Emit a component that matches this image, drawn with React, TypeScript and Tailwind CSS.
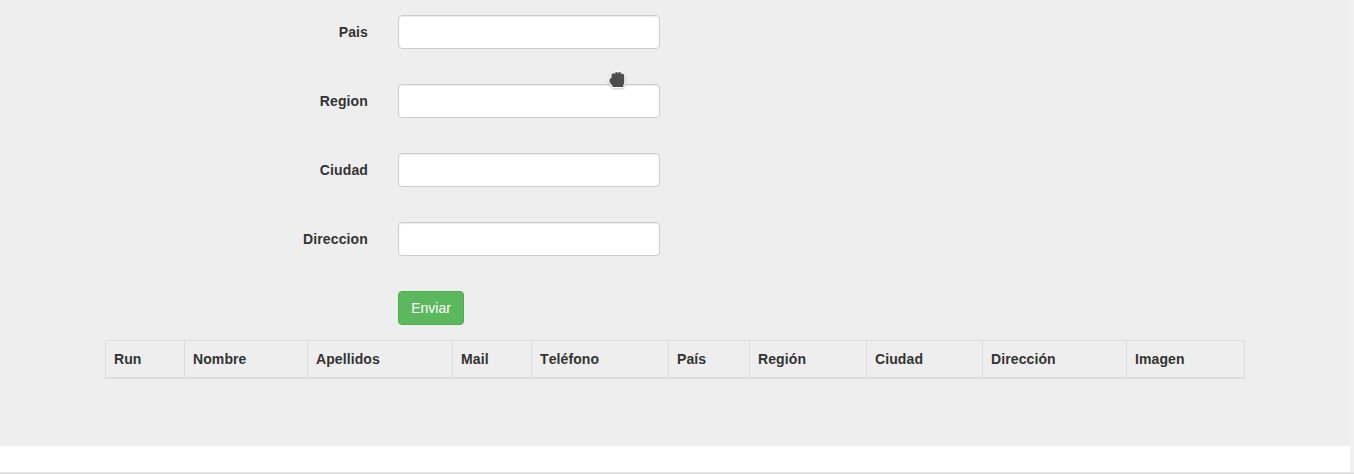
const fields = ["Pais", "Region", "Ciudad", "Direccion"];

const columns = [
  { title: "Run", width: "w-[79px]" },
  { title: "Nombre", width: "w-[123px]" },
  { title: "Apellidos", width: "w-[145px]" },
  { title: "Mail", width: "w-[79px]" },
  { title: "Teléfono", width: "w-[137px]" },
  { title: "País", width: "w-[81px]" },
  { title: "Región", width: "w-[117px]" },
  { title: "Ciudad", width: "w-[116px]" },
  { title: "Dirección", width: "w-[144px]" },
  { title: "Imagen", width: "w-[118px]" },
];

function GrabCursor() {
  return (
    <svg
      className="pointer-events-none absolute left-[607px] top-[69px] h-[22px] w-5 drop-shadow-[0_1px_1px_rgba(0,0,0,0.2)]"
      viewBox="0 0 20 22"
    >
      <path
        d="M5.6 18 V17 L2.8 13.4 Q1.6 11 3.2 9.3 L4.5 9.3 V6 Q4.6 4.3 6 4.3 L7.6 4.6 Q8.2 3 9.4 3 L10.8 3.6 Q12 2.7 13.4 3.2 L14.3 4.5 Q16.8 4.2 17.2 6 V14 L16.3 16.2 V18 Z"
        fill="#4d4d4d"
        stroke="#fff"
        strokeWidth="2"
        strokeLinejoin="round"
        paintOrder="stroke"
      />
      <path d="M7.8 3.2 V5.2 M11 2.8 V4.8 M14.2 3.2 V5.2" stroke="#c4c4c4" strokeWidth="0.8" />
    </svg>
  );
}

export default function App() {
  return (
    <div className="relative flex h-[474px] w-[1354px] overflow-hidden bg-[#f0f0f0] font-['Liberation_Sans',Arial,sans-serif] text-sm leading-5 text-[#333] [font-kerning:none]">
      <div className="flex w-[1350px] flex-col bg-white">
        <main className="h-[446px] bg-[#eee] pl-[105px] pt-[15px]">
          <form className="flex flex-col" onSubmit={(e) => e.preventDefault()}>
            {fields.map((name) => (
              <div key={name} className="mb-[35px] flex h-[34px] items-center">
                <label htmlFor={name} className="w-[263px] text-right font-bold tracking-[0.13px]">
                  {name}
                </label>
                <input
                  id={name}
                  type="text"
                  className="ml-[30px] h-[34px] w-[262px] rounded border border-[#ccc] bg-white px-3 shadow-[inset_0_1px_1px_rgba(0,0,0,0.075)] outline-none"
                />
              </div>
            ))}
            <button
              type="submit"
              className="ml-[293px] h-[34px] w-[66px] rounded border border-[#4cae4c] bg-[#5cb85c] text-white"
            >
              Enviar
            </button>
          </form>
          <table className="mt-[15px] w-[1140px] table-fixed border-separate border-spacing-0 border-r border-[#ddd] text-left">
            <thead>
              <tr>
                {columns.map((column) => (
                  <th
                    key={column.title}
                    className={`${column.width} h-[39px] border-b-2 border-l border-t border-[#ddd] px-2 py-0 font-bold tracking-[0.1px]`}
                  >
                    {column.title}
                  </th>
                ))}
              </tr>
            </thead>
          </table>
        </main>
      </div>
      <div className="absolute bottom-0 left-0 h-0.5 w-full border-t border-[#e8e8e8] bg-[#d8d8d8]" />
      <GrabCursor />
    </div>
  );
}
